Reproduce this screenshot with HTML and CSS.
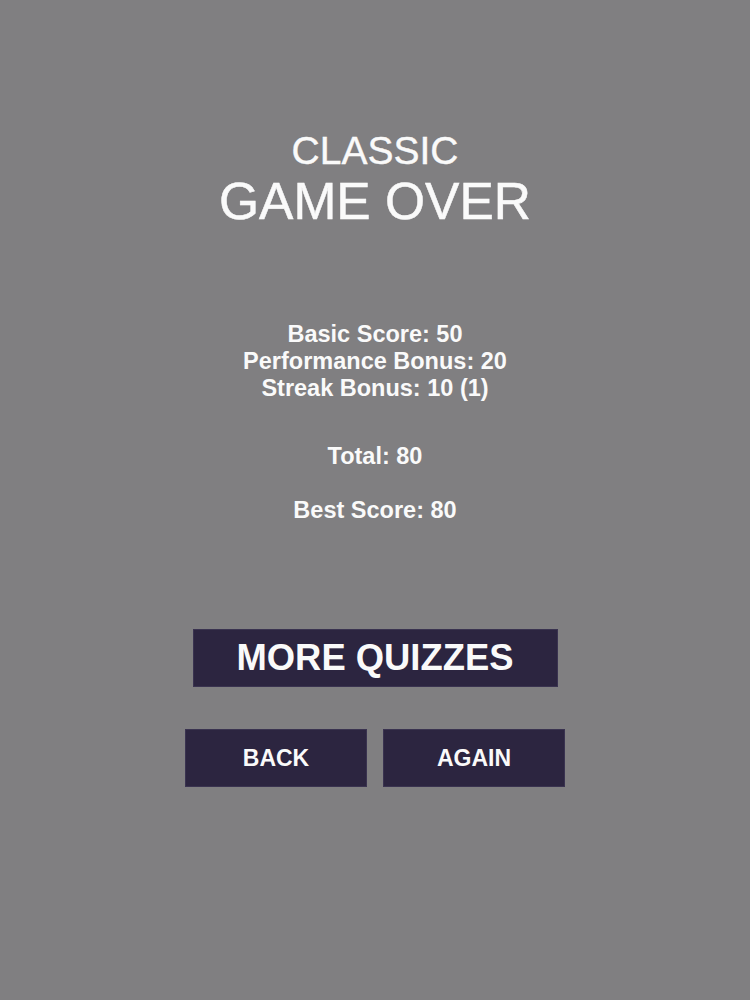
FILE: index.html
```html
<!DOCTYPE html>
<html lang="en">
<head>
    <meta charset="UTF-8">
    <title>Game Over</title>
    <link rel="stylesheet" href="styles.css">
</head>
<body>

<div class="screen">
    <!-- Titulo -->
    <div class="mode">CLASSIC</div>
    <div class="title">GAME OVER</div>

    <!-- Puntajes -->
    <div class="scores">
        <div class="line">Basic Score: 50</div>
        <div class="line">Performance Bonus: 20</div>
        <div class="line">Streak Bonus: 10 (1)</div>
    </div>
    <div class="line total">Total: 80</div>
    <div class="line best">Best Score: 80</div>

    <!-- Botones -->
    <div class="btn big">MORE QUIZZES</div>
    <div class="row">
        <div class="btn small">BACK</div>
        <div class="btn small">AGAIN</div>
    </div>
</div>

</body>
</html>
```
FILE: styles.css
```css
/* Estilo general */
body {
    margin: 0;
    background-color: #807f81;
    color: #fafafa;
    font-family: "Liberation Sans", Arial, sans-serif;
}
.screen {
    display: flex;
    flex-direction: column;
    align-items: center;
    padding-top: 129px;
}
.mode {
    font-size: 39px;
    line-height: 44px;
    -webkit-text-stroke: 0.4px #fafafa;
}
.title {
    font-size: 51.5px;
    line-height: 56px;
    -webkit-text-stroke: 0.5px #fafafa;
}
.scores {
    margin-top: 92px;
    display: flex;
    flex-direction: column;
    align-items: center;
}
.line {
    font-size: 23.5px;
    font-weight: bold;
    line-height: 27px;
}
.total {
    margin-top: 41px;
}
.best {
    margin-top: 27px;
}
.btn {
    background-color: #2c2540;
    border: 1px solid #3a3350;
    box-sizing: border-box;
    height: 58px;
    display: flex;
    align-items: center;
    justify-content: center;
    font-weight: bold;
}
.big {
    width: 365px;
    margin-top: 105px;
    font-size: 36.4px;
}
.row {
    display: flex;
    gap: 16px;
    margin-top: 42px;
}
.small {
    width: 182px;
    font-size: 23px;
}
```
